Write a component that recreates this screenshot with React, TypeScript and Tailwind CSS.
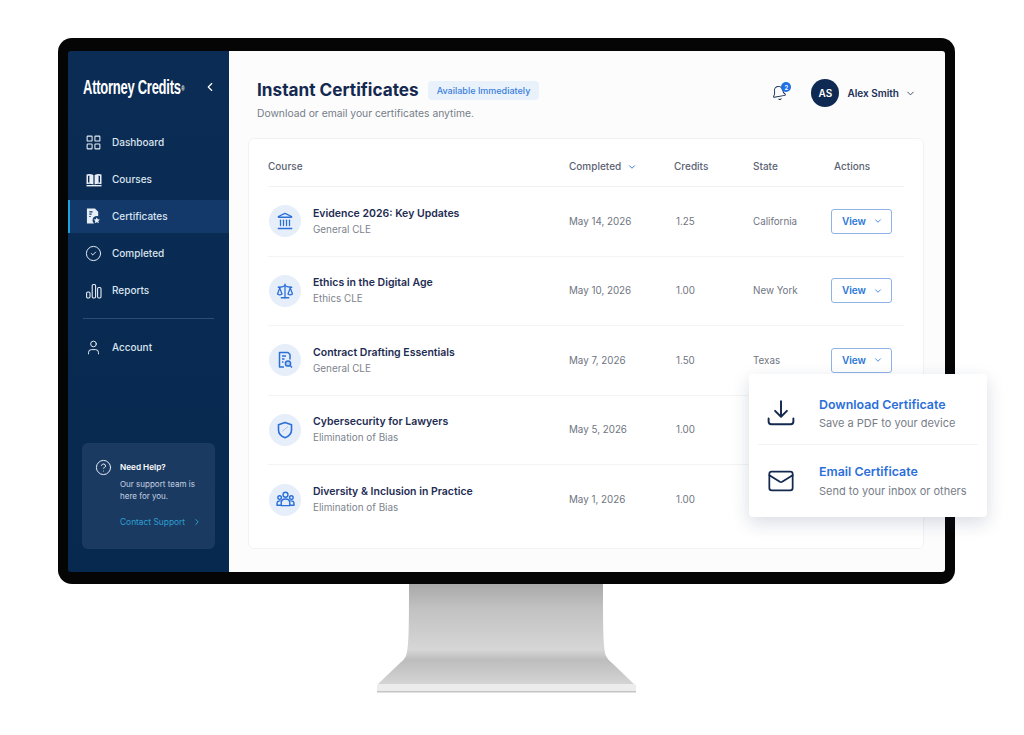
import { Bell, ChevronDown, ChevronLeft, ChevronRight, CircleCheck, CircleHelp, Landmark, LayoutGrid, Mail, Scale, User } from "lucide-react";

const Books = () => (
  <svg viewBox="0 0 16 16" className="h-4 w-4 text-[#e8eef6]" fill="currentColor">
    <path d="M0.5 2.5 Q4 1.5 7.4 3 V12.5 Q4 11.3 0.5 12.2 Z M2 4 V10.5 H3.4 V3.6 Z" fillRule="evenodd" />
    <path d="M15.5 2.5 Q12 1.5 8.6 3 V12.5 Q12 11.3 15.5 12.2 Z M12.6 3.6 V10.5 H14 V4 Z" fillRule="evenodd" />
    <rect x="0.5" y="13" width="15" height="1.4" />
  </svg>
);

const CertIcon = () => (
  <svg viewBox="0 0 16 18" className="h-[17px] w-[15px]">
    <path d="M1 0.5 H9.5 L13 4 V16.5 H1 Z" fill="#e8eef6" />
    <path d="M3.5 4 H7 M3.5 6.5 H6 M3.5 9 H5" stroke="#12396a" strokeWidth="1.2" />
    <circle cx="11.5" cy="13" r="4.5" fill="#12396a" />
    <path d="M11.5 9.8 L12.5 12 L15 12.3 L13.1 13.9 L13.7 16.3 L11.5 15 L9.3 16.3 L9.9 13.9 L8 12.3 L10.5 12 Z" fill="#e8eef6" />
  </svg>
);

const BarsIcon = () => (
  <svg viewBox="0 0 16 16" className="h-4 w-4 text-[#e8eef6]" fill="none" stroke="currentColor" strokeWidth="1.1">
    <rect x="0.6" y="9" width="3.4" height="6" rx="1.2" />
    <rect x="6.2" y="1.5" width="3.4" height="13.5" rx="1.2" />
    <rect x="11.6" y="4.5" width="3.4" height="10.5" rx="1.2" />
  </svg>
);

const ContractIcon = () => (
  <svg viewBox="0 0 18 18" className="h-[18px] w-[18px]" fill="none" stroke="#2b6fd9" strokeWidth="1.5" strokeLinejoin="round">
    <path d="M8 16 H3.5 V1.5 H12 L14 3.5 V8.5" />
    <path d="M6 5 H10 M6 8 H8.5 M6 11 H7.5" />
    <circle cx="12" cy="12.5" r="2.6" fill="#2b6fd9" fillOpacity="0.25" />
    <path d="M14 14.5 L16 16.5" />
  </svg>
);

const ShieldIcon = () => (
  <svg viewBox="0 0 18 18" className="h-[18px] w-[18px]" fill="none" stroke="#2b6fd9" strokeWidth="1.6" strokeLinejoin="round">
    <path d="M9 1.5 L15.5 3.8 V9 C15.5 12.8 12.5 15.4 9 16.7 C5.5 15.4 2.5 12.8 2.5 9 V3.8 Z" />
    <path d="M6 10.5 L12 5.5" stroke="#a9c6ef" strokeWidth="1" />
  </svg>
);

const PeopleIcon = () => (
  <svg viewBox="0 0 20 18" className="h-[17px] w-[19px]" fill="none" stroke="#2b6fd9" strokeWidth="1.5" strokeLinejoin="round">
    <circle cx="10" cy="4" r="2.6" />
    <circle cx="3.8" cy="7" r="1.9" />
    <circle cx="16.2" cy="7" r="1.9" />
    <path d="M5.5 15.5 V12.5 Q5.5 8.5 10 8.5 Q14.5 8.5 14.5 12.5 V15.5 Z" />
    <path d="M5 10.5 Q1 10 1 13.5 V15 H5.5 M15 10.5 Q19 10 19 13.5 V15 H14.5" />
  </svg>
);

const nav = [
  { label: "Dashboard", icon: <LayoutGrid className="h-[17px] w-[17px] text-[#e8eef6]" strokeWidth={1.5} />, cls: "h-[37px] pl-[17px]" },
  { label: "Courses", icon: <Books />, cls: "h-[37px] pl-[17px]" },
  { label: "Certificates", icon: <CertIcon />, cls: "h-[33px] bg-[#12396a] border-l-[2px] border-[#1ba4d8] pl-[15px] mt-[2px] mb-[2px]" },
  { label: "Completed", icon: <CircleCheck className="h-[17px] w-[17px] text-[#e8eef6]" strokeWidth={1.4} />, cls: "h-[37px] pl-[17px]" },
  { label: "Reports", icon: <BarsIcon />, cls: "h-[37px] pl-[17px]" },
];

const iconCls = "h-[18px] w-[18px] text-[#2b6fd9]";

const rows = [
  { title: "Evidence 2026: Key Updates", sub: "General CLE", date: "May 14, 2026", credits: "1.25", state: "California", icon: <Landmark className={iconCls} strokeWidth={1.7} />, view: true },
  { title: "Ethics in the Digital Age", sub: "Ethics CLE", date: "May 10, 2026", credits: "1.00", state: "New York", icon: <Scale className={iconCls} strokeWidth={1.7} />, view: true },
  { title: "Contract Drafting Essentials", sub: "General CLE", date: "May 7, 2026", credits: "1.50", state: "Texas", icon: <ContractIcon />, view: true },
  { title: "Cybersecurity for Lawyers", sub: "Elimination of Bias", date: "May 5, 2026", credits: "1.00", state: "", icon: <ShieldIcon />, view: false },
  { title: "Diversity & Inclusion in Practice", sub: "Elimination of Bias", date: "May 1, 2026", credits: "1.00", state: "", icon: <PeopleIcon />, view: false },
];

const Stand = () => (
  <svg viewBox="0 0 260 109" className="mx-auto block h-[109px] w-[260px]">
    <defs>
      <linearGradient id="neck" x1="0" y1="0" x2="0" y2="1">
        <stop offset="0" stopColor="#a9a9a9" />
        <stop offset="0.25" stopColor="#c2c2c2" />
        <stop offset="0.66" stopColor="#d6d6d7" />
        <stop offset="0.76" stopColor="#bdbdbe" />
        <stop offset="1" stopColor="#d4d4d5" />
      </linearGradient>
    </defs>
    <path d="M33 0 H227 C227 40 227 64 230 72 Q232 76 236 79 L258 100 H2 L24 79 Q28 76 30 72 C33 64 33 40 33 0 Z" fill="url(#neck)" />
    <rect x="1" y="100" width="259" height="8" rx="1.5" fill="#ececec" />
    <rect x="1" y="107" width="259" height="1.5" fill="#c4c4c4" />
  </svg>
);

export default function App() {
  return (
    <div className="h-[735px] w-[1024px] overflow-hidden bg-white pl-[58px] pt-[38px] font-['Inter',sans-serif]">
      <div className="relative w-[897px]">
        <div className="h-[546px] rounded-[14px] bg-[#050505] px-[10px] pb-[12px] pt-[13px]">
          <div className="flex h-full overflow-hidden rounded-[3px]">
            <aside className="flex w-[161px] shrink-0 flex-col bg-gradient-to-b from-[#0b2c54] to-[#07284f]">
              <div className="flex items-center justify-between pl-[15px] pr-[12px] pt-[26px]">
                <span className="w-[110px] origin-left scale-x-[0.65] whitespace-nowrap font-['Liberation_Sans',sans-serif] text-[20px] font-bold leading-[20px] tracking-[-0.4px] text-white">
                  Attorney Credits<sup className="ml-[1px] text-[7px] text-white">®</sup>
                </span>
                <ChevronLeft className="h-[14px] w-[14px] shrink-0 text-white" strokeWidth={2} />
              </div>
              <nav className="mt-[27px] flex flex-col">
                {nav.map((n) => (
                  <div key={n.label} className={`flex items-center gap-[10px] ${n.cls}`}>
                    <span className="flex w-[17px] justify-center">{n.icon}</span>
                    <span className="text-[10px] font-medium text-[#dbe4ef]">{n.label}</span>
                  </div>
                ))}
              </nav>
              <div className="mx-[15px] mt-[9px] h-px bg-[#2e4d74]" />
              <div className="mt-[10px] flex h-[37px] items-center gap-[10px] pl-[17px]">
                <User className="h-[17px] w-[17px] text-[#e8eef6]" strokeWidth={1.4} />
                <span className="text-[10px] font-medium text-[#dbe4ef]">Account</span>
              </div>
              <div className="mx-[14px] mb-[23px] mt-auto flex h-[106px] gap-[8px] rounded-[6px] bg-[#1b3a62] pl-[13px] pt-[16px]">
                <CircleHelp className="h-[17px] w-[17px] shrink-0 text-[#e8eef6]" strokeWidth={1.4} />
                <div className="pt-[2px]">
                  <div className="text-[8.2px] font-semibold leading-[12px] text-white">Need Help?</div>
                  <div className="mt-[5px] text-[8px] leading-[12px] text-[#c6d2e0]">
                    Our support team is
                    <br />
                    here for you.
                  </div>
                  <div className="mt-[14px] flex items-center gap-[7px] text-[8.4px] leading-[12px] text-[#2c9fd0]">
                    Contact Support <ChevronRight className="h-[10px] w-[10px]" strokeWidth={2.4} />
                  </div>
                </div>
              </div>
            </aside>
            <main className="flex-1 bg-[#fcfcfd] pl-[19px] pr-[21px]">
              <div className="flex items-start justify-between pl-[9px] pt-[28px]">
                <div>
                  <div className="flex items-center gap-[9px]">
                    <h1 className="text-[17.2px] font-bold leading-[22px] text-[#14294f]">Instant Certificates</h1>
                    <span className="rounded-[4px] bg-[#e9f1fb] px-[9px] py-[3px] text-[9px] font-medium leading-[13px] text-[#3a7fdc]">Available Immediately</span>
                  </div>
                  <p className="mt-[5px] text-[10.3px] leading-[14px] text-[#767c87]">Download or email your certificates anytime.</p>
                </div>
                <div className="flex items-center pr-[8px]">
                  <div className="relative mr-[24px]">
                    <Bell className="h-[16px] w-[16px] rotate-[-10deg] text-[#14294f]" strokeWidth={1.4} />
                    <span className="absolute -right-[4px] -top-[3px] flex h-[10px] w-[10px] items-center justify-center rounded-full bg-[#1f6fe5] text-[6px] font-semibold text-white">2</span>
                  </div>
                  <div className="flex h-[28px] w-[28px] items-center justify-center rounded-full bg-[#0e2a52] text-[10px] font-semibold text-white">AS</div>
                  <span className="ml-[8px] text-[10px] font-semibold text-[#1b2f55]">Alex Smith</span>
                  <ChevronDown className="ml-[6px] h-[11px] w-[11px] text-[#33435f]" strokeWidth={2} />
                </div>
              </div>
              <section className="mt-[18px] h-[411px] rounded-[6px] border border-[#f0f2f5] bg-white px-[19px]">
                <div className="grid h-[48px] grid-cols-[301px_105px_79px_81px_1fr] items-center border-b border-[#eff1f4] pt-[8px] text-[10px] font-medium text-[#5b6373]">
                  <span>Course</span>
                  <span className="flex items-center gap-[6px]">
                    Completed <ChevronDown className="h-[10px] w-[10px] text-[#2b6fd9]" strokeWidth={2.2} />
                  </span>
                  <span>Credits</span>
                  <span>State</span>
                  <span>Actions</span>
                </div>
                {rows.map((r, i) => (
                  <div key={r.title} className={`grid h-[69.5px] grid-cols-[301px_105px_79px_81px_1fr] items-center ${i < 4 ? "border-b border-[#f2f4f6]" : ""}`}>
                    <div className="flex items-center gap-[12px] pl-[1px]">
                      <div className="flex h-[32px] w-[32px] items-center justify-center rounded-full bg-[#e6eef9]">{r.icon}</div>
                      <div className="-mt-[1px]">
                        <div className="text-[10.5px] font-semibold leading-[15px] text-[#1e2c52]">{r.title}</div>
                        <div className="mt-[1px] text-[9.9px] leading-[14px] text-[#7d838e]">{r.sub}</div>
                      </div>
                    </div>
                    <span className="mt-[2px] text-[9.8px] text-[#6f7682]">{r.date}</span>
                    <span className="mt-[2px] pl-[2px] text-[9.8px] text-[#6f7682]">{r.credits}</span>
                    <span className="mt-[2px] text-[9.8px] text-[#6f7682]">{r.state}</span>
                    {r.view ? (
                      <div className="-ml-[3px] flex h-[25px] w-[61px] items-center justify-center gap-[7px] rounded-[3px] border border-[#8fb3e6] pl-[2px] text-[10px] font-semibold text-[#2b77d9]">
                        View <ChevronDown className="h-[10px] w-[10px]" strokeWidth={2} />
                      </div>
                    ) : (
                      <span />
                    )}
                  </div>
                ))}
              </section>
            </main>
          </div>
        </div>
        <div className="absolute left-[691px] top-[336px] h-[143px] w-[238px] rounded-[4px] bg-white px-[9px] shadow-[0_6px_18px_rgba(20,40,80,0.16)]">
          <div className="flex h-[71px] items-center gap-[24px] border-b border-[#f0f2f5] pl-[9px] pt-[8px]">
            <svg viewBox="0 0 26 26" className="h-[28px] w-[28px] shrink-0" fill="none" stroke="#14294f" strokeWidth="1.8" strokeLinecap="round" strokeLinejoin="round">
              <path d="M13 2 V16 M7.5 11 L13 16.5 L18.5 11" />
              <path d="M1.5 18 V21 Q1.5 23.5 4 23.5 H22 Q24.5 23.5 24.5 21 V18" />
            </svg>
            <div>
              <div className="text-[12.4px] font-semibold leading-[16px] text-[#2b6fd9]">Download Certificate</div>
              <div className="mt-[3px] text-[11px] leading-[14px] text-[#777d88]">Save a PDF to your device</div>
            </div>
          </div>
          <div className="flex h-[71px] items-center gap-[24px] pl-[9px]">
            <Mail className="h-[28px] w-[28px] shrink-0 text-[#14294f]" strokeWidth={1.5} />
            <div>
              <div className="text-[12.4px] font-semibold leading-[16px] text-[#2b6fd9]">Email Certificate</div>
              <div className="mt-[4px] text-[11px] leading-[14px] text-[#777d88]">Send to your inbox or others</div>
            </div>
          </div>
        </div>
        <div className="-ml-[1px]">
          <Stand />
        </div>
      </div>
    </div>
  );
}
